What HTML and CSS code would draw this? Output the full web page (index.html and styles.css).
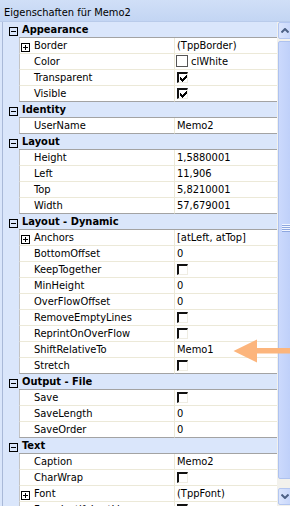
FILE: index.html
```html
<!DOCTYPE html>
<html>
<head>
<meta charset="utf-8">
<link rel="stylesheet" href="styles.css">
</head>
<body>
<div class="title">Eigenschaften für Memo2</div>
<div class="main">
  <div class="grid">
    <div class="sec">
      <div class="hdr"><svg class="pm" width="9" height="9"><path d="M0.5 0.5h8v8h-8z M2 4.5h5" /></svg>Appearance</div>
      <div class="row"><div class="name"><svg class="pm sub" width="9" height="9"><path d="M0.5 0.5h8v8h-8z M2 4.5h5 M4.5 2v5" /></svg>Border</div><div class="val">(TppBorder)</div></div>
      <div class="row"><div class="name">Color</div><div class="val"><span class="swatch"></span>clWhite</div></div>
      <div class="row"><div class="name">Transparent</div><div class="val"><span class="cb"><svg width="7" height="7"><path d="M0 2h1v1h1v1h1v-1h1v-1h1v-1h1v-1h1v3h-1v1h-1v1h-1v1h-1v1h-1v-1h-1v-1h-1v-1h-1z"/></svg></span></div></div>
      <div class="row"><div class="name">Visible</div><div class="val"><span class="cb"><svg width="7" height="7"><path d="M0 2h1v1h1v1h1v-1h1v-1h1v-1h1v-1h1v3h-1v1h-1v1h-1v1h-1v1h-1v-1h-1v-1h-1v-1h-1z"/></svg></span></div></div>
    </div>
    <div class="sec">
      <div class="hdr"><svg class="pm" width="9" height="9"><path d="M0.5 0.5h8v8h-8z M2 4.5h5" /></svg>Identity</div>
      <div class="row"><div class="name">UserName</div><div class="val">Memo2</div></div>
    </div>
    <div class="sec">
      <div class="hdr"><svg class="pm" width="9" height="9"><path d="M0.5 0.5h8v8h-8z M2 4.5h5" /></svg>Layout</div>
      <div class="row"><div class="name">Height</div><div class="val">1,5880001</div></div>
      <div class="row"><div class="name">Left</div><div class="val">11,906</div></div>
      <div class="row"><div class="name">Top</div><div class="val">5,8210001</div></div>
      <div class="row"><div class="name">Width</div><div class="val">57,679001</div></div>
    </div>
    <div class="sec">
      <div class="hdr"><svg class="pm" width="9" height="9"><path d="M0.5 0.5h8v8h-8z M2 4.5h5" /></svg>Layout - Dynamic</div>
      <div class="row"><div class="name"><svg class="pm sub" width="9" height="9"><path d="M0.5 0.5h8v8h-8z M2 4.5h5 M4.5 2v5" /></svg>Anchors</div><div class="val">[atLeft, atTop]</div></div>
      <div class="row"><div class="name">BottomOffset</div><div class="val">0</div></div>
      <div class="row"><div class="name">KeepTogether</div><div class="val"><span class="cb"></span></div></div>
      <div class="row"><div class="name">MinHeight</div><div class="val">0</div></div>
      <div class="row"><div class="name">OverFlowOffset</div><div class="val">0</div></div>
      <div class="row"><div class="name">RemoveEmptyLines</div><div class="val"><span class="cb"></span></div></div>
      <div class="row"><div class="name">ReprintOnOverFlow</div><div class="val"><span class="cb"></span></div></div>
      <div class="row"><div class="name">ShiftRelativeTo</div><div class="val">Memo1</div></div>
      <div class="row"><div class="name">Stretch</div><div class="val"><span class="cb"></span></div></div>
    </div>
    <div class="sec">
      <div class="hdr"><svg class="pm" width="9" height="9"><path d="M0.5 0.5h8v8h-8z M2 4.5h5" /></svg>Output - File</div>
      <div class="row"><div class="name">Save</div><div class="val"><span class="cb"></span></div></div>
      <div class="row"><div class="name">SaveLength</div><div class="val">0</div></div>
      <div class="row"><div class="name">SaveOrder</div><div class="val">0</div></div>
    </div>
    <div class="sec">
      <div class="hdr"><svg class="pm" width="9" height="9"><path d="M0.5 0.5h8v8h-8z M2 4.5h5" /></svg>Text</div>
      <div class="row"><div class="name">Caption</div><div class="val">Memo2</div></div>
      <div class="row"><div class="name">CharWrap</div><div class="val"><span class="cb"></span></div></div>
      <div class="row"><div class="name"><svg class="pm sub" width="9" height="9"><path d="M0.5 0.5h8v8h-8z M2 4.5h5 M4.5 2v5" /></svg>Font</div><div class="val">(TppFont)</div></div>
      <div class="row"><div class="name">ForceJustifyLastLine</div><div class="val"><span class="cb"></span></div></div>
    </div>
  </div>
  <div class="sb">
    <div class="btn"><svg width="8" height="5"><path d="M0.5 4.5l3.5-3.5 3.5 3.5"/></svg></div>
    <div class="thumb"><div class="grip"></div></div>
    <div class="btn down"><svg width="8" height="5"><path d="M0.5 0.5l3.5 3.5 3.5-3.5"/></svg></div>
  </div>
</div>
<svg class="arrow" width="58" height="28" viewBox="0 0 58 28"><polygon points="1.5,14 25,2.5 25,11 58,11 58,16.5 25,16.5 25,25.5"/></svg>
</body>
</html>
```
FILE: styles.css
```css
* { box-sizing: border-box; }
html, body { margin: 0; padding: 0; }
body {
  width: 290px;
  height: 506px;
  overflow: hidden;
  position: relative;
  background: #fff;
  color: #000;
  font: 11px "DejaVu Sans Condensed", "DejaVu Sans", sans-serif;
}
.title {
  height: 22px;
  padding: 6px 0 0 4px;
  line-height: 14px;
  background: linear-gradient(#d0dff7, #c3d5f3);
  border-bottom: 1px solid #b9cbea;
  white-space: nowrap;
}
.main {
  display: flex;
  height: 484px;
  overflow: hidden;
}
.grid {
  width: 277px;
  flex: none;
  background: #dae6fb;
  padding-left: 2px;
}
.sec {
  border-left: 1px solid #a9b9d8;
}
.hdr {
  height: 16px;
  padding: 1px 0 0 3px;
  line-height: 14px;
  font-weight: bold;
  display: flex;
  align-items: flex-start;
  background-color: #dae6fb;
  background-image: linear-gradient(#a3a3a3, #a3a3a3);
  background-size: calc(100% - 16px) 1px;
  background-position: 16px 100%;
  background-repeat: no-repeat;
  white-space: nowrap;
}
.pm {
  flex: none;
  margin: 4px 4px 0 3px;
}
.pm path {
  fill: none;
  stroke: #000;
  stroke-width: 1;
  shape-rendering: crispEdges;
}
.pm.sub {
  margin: 4px 4px 0 1px;
}
.row {
  display: flex;
  height: 16px;
  margin-left: 16px;
}
.name, .val {
  height: 16px;
  padding-top: 1px;
  line-height: 14px;
  background: #fff;
  border-bottom: 1px solid #ece9d8;
  white-space: nowrap;
  overflow: hidden;
}
.name {
  width: 156px;
  border-left: 1px solid #c4c4c4;
  border-right: 1px solid #ece9d8;
  padding-left: 14px;
  display: flex;
  align-items: flex-start;
}
.name .pm.sub {
  margin-left: 1px;
}
.name:has(.pm) {
  padding-left: 0;
}
.val {
  flex: 1;
  padding-left: 2px;
  display: flex;
  align-items: flex-start;
}
.row:last-child .name,
.row:last-child .val {
  border-bottom-color: #a3a3a3;
}
.swatch {
  width: 12px;
  height: 12px;
  border: 1px solid #555;
  background: #fff;
  margin: 0 3px 0 -1px;
  flex: none;
}
.cb {
  flex: none;
  width: 11px;
  height: 11px;
  margin-top: 1px;
  border-top: 2px solid #111;
  border-left: 2px solid #111;
  border-right: 1px solid #efede3;
  border-bottom: 1px solid #efede3;
  background: #fff;
  display: flex;
  padding: 1px 0 0 1px;
}
.cb svg { display: block; }
.cb path { fill: #000; }
.sb {
  width: 13px;
  flex: none;
  background: #f2f1ec;
  display: flex;
  flex-direction: column;
  padding: 0 0 1px 1px;
  overflow: hidden;
}
.btn {
  width: 17px;
  height: 17px;
  flex: none;
  border: 1px solid #b3c6f0;
  border-radius: 2px;
  background: linear-gradient(90deg, #dbe5fd, #c3d3fa);
  display: flex;
  align-items: center;
  padding-left: 2px;
}
.btn svg { display: block; }
.btn path {
  fill: none;
  stroke: #4d6185;
  stroke-width: 2;
}
.btn.down { margin-top: 0; }
.thumb {
  flex: 1;
  width: 17px;
  margin: 2px 0 9px;
  border: 1px solid #aec2ef;
  border-radius: 2px;
  background: linear-gradient(90deg, #cbd9fc, #bbcdf8);
  padding: 182px 0 0 3px;
}
.grip {
  width: 8px;
  height: 8px;
  background: repeating-linear-gradient(#f2f6ff 0 1px, #8ea7e0 1px 2px);
}
.arrow {
  position: absolute;
  left: 232px;
  top: 337px;
}
.arrow polygon { fill: #fcb57c; }
```
